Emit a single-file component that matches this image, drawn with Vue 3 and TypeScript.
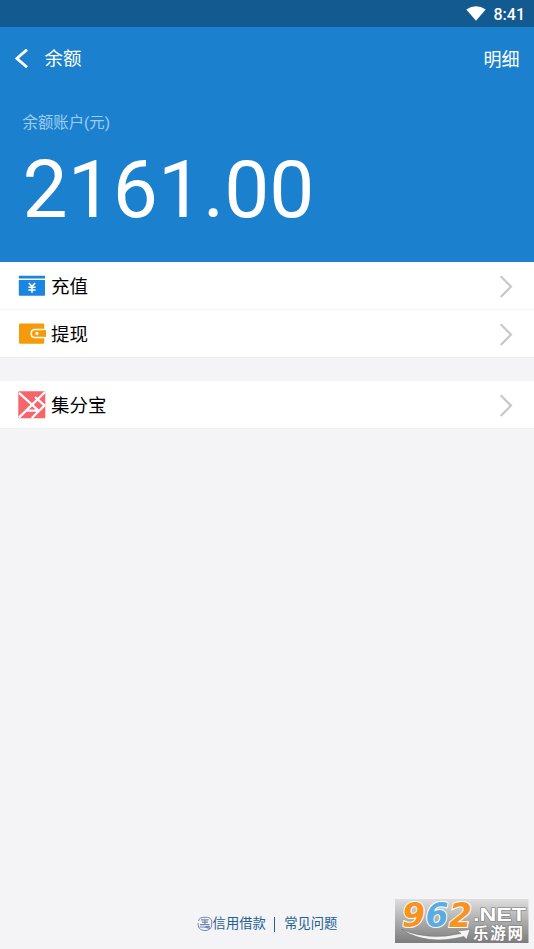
<script setup lang="ts">
interface Row {
  label: string
  icon: 'recharge' | 'wallet' | 'points'
}

const groups: Row[][] = [
  [
    { label: '充值', icon: 'recharge' },
    { label: '提现', icon: 'wallet' },
  ],
  [{ label: '集分宝', icon: 'points' }],
]
</script>

<template>
  <div class="screen">
    <div class="status">
      <svg class="wifi" width="20" height="16" viewBox="0 0 20 16">
        <path d="M0.3 3.6Q10-3.2 19.7 3.6L10 14.8Z" fill="#fff" />
      </svg>
      <span class="time">8:41</span>
    </div>

    <header class="nav">
      <svg class="back" width="15" height="20" viewBox="0 0 15 20">
        <path d="M13 0.6L2.8 9.4L13 18.2" fill="none" stroke="#fff" stroke-width="2.8" />
      </svg>
      <span class="title">余额</span>
      <span class="detail">明细</span>
    </header>

    <section class="balance">
      <div class="caption">余额账户(元)</div>
      <div class="amount">2161.00</div>
    </section>

    <div v-for="(group, i) in groups" :key="i" class="group">
      <div v-for="row in group" :key="row.label" class="row">
        <svg v-if="row.icon === 'recharge'" class="icon" width="28" height="28" viewBox="0 0 28 28">
          <path d="M1.6 3.7H26.4Q27 3.7 27 4.3V6.4H0.8V4.3Q0.8 3.7 1.6 3.7ZM0.8 8H27V23Q27 23.7 26.4 23.7H1.6Q0.8 23.7 0.8 23Z" fill="#1a86df" />
          <path d="M10.9 11L14 14.6L17.1 11M14 14.4V20.8M10.4 15.2H17.6M10.4 18H17.6" fill="none" stroke="#fff" stroke-width="1.6" />
        </svg>
        <svg v-else-if="row.icon === 'wallet'" class="icon" width="28" height="28" viewBox="0 0 28 28">
          <rect x="1" y="3.4" width="25.2" height="20.3" rx="1.2" fill="#f59b0a" />
          <path d="M28 9.5H17Q13.2 9.5 13.2 13.4Q13.2 17.5 17 17.5H28" fill="#f59b0a" stroke="#fffaf0" stroke-width="1.6" />
          <rect x="25" y="10.3" width="2.8" height="6.4" fill="#f59b0a" />
          <rect x="17.5" y="12.1" width="2.8" height="2.8" rx="0.7" fill="#fff" />
        </svg>
        <svg v-else class="icon" width="28" height="28" viewBox="0 0 28 28">
          <rect x="0.3" y="0.2" width="27" height="27" rx="1" fill="#f5656b" />
          <path d="M1 1.8L21.5 20.5M27 1L1 26.6M17 6L27.2 15.2M27 14L13.8 27M9 19.7H19" fill="none" stroke="#fff" stroke-width="2.3" />
        </svg>
        <span class="label">{{ row.label }}</span>
        <svg class="chevron" width="14" height="24" viewBox="0 0 14 24">
          <path d="M1.7 2.2L12 12.6L1.7 23" fill="none" stroke="#c8c8c8" stroke-width="2.2" />
        </svg>
      </div>
    </div>

    <footer class="footer">
      <svg class="seal" width="16" height="16" viewBox="0 0 16 16" fill="none" stroke="#7187b3">
        <path d="M1.5 5Q2 1.2 8 1.2Q14 1.2 14.7 5V10Q13.5 14.5 8 14.5Q2.5 14.5 1.2 10V7" stroke-width="1" />
        <path d="M4 3.9H11.5M5 6.2H11M3 8.6H12.5M8 4V9M2.5 11H7L13 12.4M8.5 10.6H13" stroke-width="1.2" />
      </svg>
      <span>信用借款</span>
      <i class="divider"></i>
      <span>常见问题</span>
    </footer>

    <svg class="watermark" width="134" height="44" viewBox="0 0 134 44">
      <defs>
        <linearGradient id="plate" x1="0" y1="0" x2="0" y2="1">
          <stop offset="0" stop-color="#dedede" />
          <stop offset="1" stop-color="#7c7c7c" />
        </linearGradient>
      </defs>
      <rect width="133.5" height="44" fill="url(#plate)" />
      <path d="M6.5 30.5Q34 42 66 34.5L62.5 32L75 30.5L71.5 40.5L69 37.5Q32 47 6.5 30.5Z" fill="#f4f4f4" stroke="#777" stroke-width="0.6" />
      <g class="digits">
        <text x="7" y="28">9</text>
        <text x="30.5" y="28">6</text>
        <text x="54" y="28">2</text>
      </g>
      <text class="net" x="78" y="21.7" textLength="53" lengthAdjust="spacingAndGlyphs">.NET</text>
      <text class="site" x="78" y="40" textLength="50">乐游网</text>
    </svg>
  </div>
</template>

<style>
body {
  margin: 0;
  overflow: hidden;
}
</style>

<style scoped>
.screen {
  position: relative;
  display: flex;
  flex-direction: column;
  width: 534px;
  height: 949px;
  background: #f4f4f6;
  font-family: Roboto, "Noto Sans CJK SC", sans-serif;
}
.status {
  box-sizing: border-box;
  display: flex;
  align-items: center;
  justify-content: flex-end;
  height: 27px;
  padding-right: 9px;
  background: #135a90;
  color: #fff;
}
.wifi {
  margin-right: 8px;
}
.time {
  font-size: 16px;
  font-weight: 500;
  line-height: 27px;
  padding-top: 1px;
}
.nav {
  box-sizing: border-box;
  display: flex;
  align-items: center;
  height: 63px;
  padding: 0 14.5px 0 14px;
  background: #1b81cf;
  color: #fff;
  font-size: 18.5px;
  line-height: 27px;
}
.title {
  margin-left: 15.5px;
  padding-top: 2px;
}
.detail {
  margin-left: auto;
  padding-top: 1px;
  font-size: 18px;
}
.balance {
  box-sizing: border-box;
  height: 172px;
  padding: 22px 23px 0 22.5px;
  background: #1b81cf;
}
.caption {
  color: #9fcdf0;
  font-size: 15.4px;
  line-height: 23px;
}
.amount {
  margin-top: 8px;
  color: #fff;
  font-size: 80.3px;
  line-height: 94px;
}
.group + .group {
  margin-top: 23px;
}
.row {
  box-sizing: border-box;
  display: flex;
  align-items: center;
  height: 48px;
  padding: 0 21px 0 18px;
  background: #fff;
  border-bottom: 1px solid #f0f0f1;
}
.row:not(:last-child) {
  border-bottom-color: #f6f6f6;
}
.label {
  margin-left: 5px;
  padding-top: 4px;
  color: #000;
  font-size: 18.5px;
  line-height: 27px;
}
.chevron {
  margin-left: auto;
}
.footer {
  display: flex;
  align-items: center;
  justify-content: center;
  margin-top: auto;
  height: 20px;
  margin-bottom: 15px;
  color: #235e93;
  font-size: 13.3px;
  line-height: 20px;
}
.divider {
  width: 1.4px;
  height: 15px;
  margin: 0 9px 0 8px;
  background: #235e93;
}
.watermark {
  position: absolute;
  left: 395px;
  top: 899px;
}
.digits {
  font: italic bold 33px "DejaVu Sans", sans-serif;
  stroke: #fff;
  stroke-width: 2px;
  paint-order: stroke;
  fill: #f7941e;
}
.digits text:nth-child(2) {
  fill: #5aace0;
}
.net {
  font: bold 18px "Liberation Sans", sans-serif;
  fill: #fff;
  stroke: #777;
  stroke-width: 1px;
  paint-order: stroke;
}
.site {
  font: bold 15.5px "Noto Sans CJK SC", sans-serif;
  fill: #fff;
  stroke: #777;
  stroke-width: 1px;
  paint-order: stroke;
}
</style>
